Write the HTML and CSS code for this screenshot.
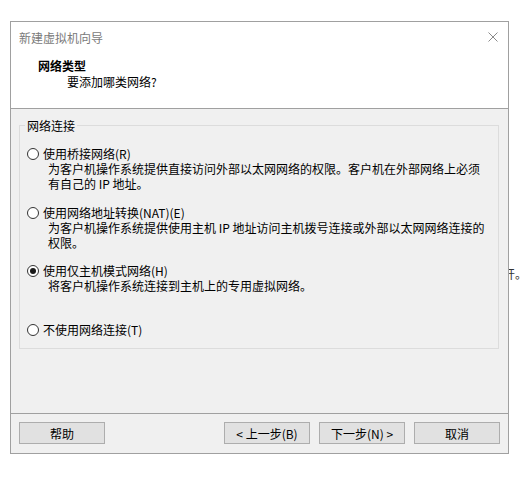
FILE: index.html
```html
<!DOCTYPE html>
<html lang="zh-CN">
<head>
<meta charset="utf-8">
<title>新建虚拟机向导</title>
<link rel="stylesheet" href="styles.css">
</head>
<body>
<span class="bg-text">开。</span>
<div class="dialog">
  <div class="header">
    <div class="titlebar">
      <span class="title">新建虚拟机向导</span>
      <svg class="close" width="10" height="10" viewBox="0 0 10 10"><path d="M0.5 0.5 L9.5 9.5 M9.5 0.5 L0.5 9.5" stroke="#8a8a8a" stroke-width="1" fill="none"/></svg>
    </div>
    <div class="heading">网络类型</div>
    <div class="subheading">要添加哪类网络?</div>
  </div>
  <div class="content">
    <fieldset class="group">
      <legend class="legend">网络连接</legend>
      <div class="options">
        <div class="option">
          <div class="radio-row"><span class="radio"></span><span class="label">使用桥接网络(R)</span></div>
          <div class="desc"><div class="line">为客户机操作系统提供直接访问外部以太网网络的权限。客户机在外部网络上必须</div><div class="line">有自己的 IP 地址。</div></div>
        </div>
        <div class="option">
          <div class="radio-row"><span class="radio"></span><span class="label">使用网络地址转换(NAT)(E)</span></div>
          <div class="desc"><div class="line">为客户机操作系统提供使用主机 IP 地址访问主机拨号连接或外部以太网网络连接的</div><div class="line">权限。</div></div>
        </div>
        <div class="option">
          <div class="radio-row"><span class="radio checked"></span><span class="label">使用仅主机模式网络(H)</span></div>
          <div class="desc"><div class="line">将客户机操作系统连接到主机上的专用虚拟网络。</div></div>
        </div>
        <div class="option">
          <div class="radio-row"><span class="radio"></span><span class="label">不使用网络连接(T)</span></div>
        </div>
      </div>
    </fieldset>
  </div>
  <div class="footer">
    <button class="btn">帮助</button>
    <button class="btn push">&lt; 上一步(B)</button>
    <button class="btn">下一步(N) &gt;</button>
    <button class="btn">取消</button>
  </div>
</div>
</body>
</html>
```

FILE: styles.css
```css
html, body {
  margin: 0;
  padding: 0;
}
body {
  position: relative;
  width: 526px;
  height: 481px;
  background: #ffffff;
  font-family: "Noto Sans CJK SC", "Noto Sans", sans-serif;
  font-size: 12px;
  line-height: 15px;
  color: #000000;
  overflow: hidden;
}
.bg-text {
  position: absolute;
  left: 503px;
  top: 266px;
  color: #333;
  z-index: 0;
}
.dialog {
  position: relative;
  z-index: 1;
  margin: 21px 0 0 10px;
  width: 499px;
  height: 433px;
  box-sizing: border-box;
  border: 1px solid #a0a0a0;
  display: flex;
  flex-direction: column;
  background: #f0f0f0;
}
.header {
  height: 87px;
  box-sizing: border-box;
  flex: none;
  background: #ffffff;
  border-bottom: 1px solid #a0a0a0;
  padding: 8px 10px 0 8px;
}
.titlebar {
  display: flex;
  justify-content: space-between;
  align-items: center;
  height: 15px;
}
.title {
  color: #7a7a7a;
}
.close {
  display: block;
  margin-top: -2px;
}
.heading {
  margin-top: 13px;
  padding-left: 19px;
  font-weight: bold;
  line-height: 16px;
}
.subheading {
  padding-left: 48px;
}
.content {
  flex: 1;
  padding: 9px 9px 0 8px;
}
.group {
  margin: 0;
  padding: 13px 0 11px 0;
  min-width: 0;
  border: 1px solid #dcdcdc;
  width: 480px;
  box-sizing: border-box;
}
.legend {
  margin-left: 5px;
  padding: 0 2px;
  line-height: 15px;
}
.options {
  display: grid;
  grid-template-rows: 59px 58px 59px auto;
}
.option {
  padding-left: 7px;
}
.radio-row {
  display: flex;
  align-items: center;
  gap: 4px;
  height: 15px;
}
.radio {
  width: 12px;
  height: 12px;
  box-sizing: border-box;
  border: 1px solid #333333;
  border-radius: 50%;
  background: #ffffff;
  display: flex;
  align-items: center;
  justify-content: center;
  flex: none;
}
.radio.checked::after {
  content: "";
  width: 6px;
  height: 6px;
  border-radius: 50%;
  background: #1a1a1a;
}
.desc {
  margin-left: 21px;
  white-space: nowrap;
}
.line {
  height: 15px;
}
.footer {
  height: 40px;
  flex: none;
  box-sizing: border-box;
  border-top: 1px solid #a0a0a0;
  padding: 8px 8px 0 8px;
  display: flex;
  gap: 9px;
}
.btn {
  width: 86px;
  height: 22px;
  box-sizing: border-box;
  border: 1px solid #adadad;
  background: #e1e1e1;
  font-family: inherit;
  font-size: 12px;
  line-height: 15px;
  color: #000;
  padding: 0;
  margin: 0;
}
.push {
  margin-left: auto;
}
```
